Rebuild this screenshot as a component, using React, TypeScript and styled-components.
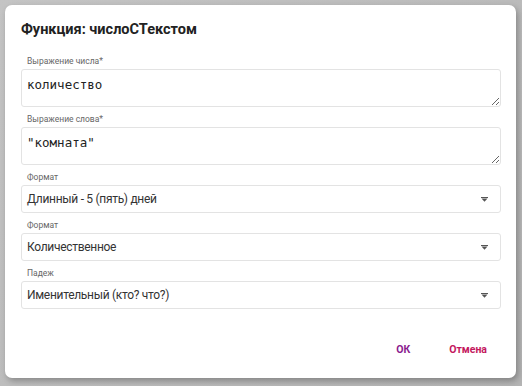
import React from "react";
import styled, { createGlobalStyle } from "styled-components";

const GlobalStyle = createGlobalStyle`
    html, body {
        margin: 0;
        padding: 0;
        width: 522px;
        height: 386px;
        overflow: hidden;
        background: #bcbcbc;
        font-family: Roboto, "Noto Sans", sans-serif;
    }
`;

const Backdrop = styled.div`
    width: 522px;
    height: 386px;
    padding: 5px 6px 8px 5px;
    box-sizing: border-box;
    background: linear-gradient(135deg, #c4c4c4 0%, #b4b4b4 100%);
`;

const Dialog = styled.div`
    width: 511px;
    height: 373px;
    box-sizing: border-box;
    background: #fff;
    border-radius: 7px;
    box-shadow: 2px 3px 6px rgba(0, 0, 0, 0.28);
    padding: 15px 15px 11px 16px;
    display: flex;
    flex-direction: column;
`;

const Title = styled.h2`
    margin: 0 0 15px;
    font-size: 14.5px;
    line-height: 20px;
    font-weight: 700;
    color: #222;
`;

const Fields = styled.div`
    display: flex;
    flex-direction: column;
    gap: 6px;
`;

const Field = styled.label`
    display: flex;
    flex-direction: column;
`;

const Label = styled.span`
    font-size: 8.5px;
    line-height: 12px;
    color: #666;
    padding-left: 6px;
    margin-bottom: 2px;
`;

const Area = styled.textarea<{ $height: number }>`
    display: block;
    box-sizing: border-box;
    width: 100%;
    height: ${(p) => p.$height}px;
    margin: 0;
    border: 1px solid #e3e3e3;
    border-radius: 3px;
    padding: 7px 5px;
    font-family: "DejaVu Sans Mono", "Liberation Mono", monospace;
    font-size: 12.5px;
    line-height: 16px;
    color: #222;
    resize: vertical;
    outline: none;
`;

const Select = styled.div`
    box-sizing: border-box;
    height: 28px;
    border: 1px solid #e3e3e3;
    border-radius: 3px;
    padding: 0 12px 0 5px;
    display: flex;
    align-items: center;
    justify-content: space-between;
    font-size: 12px;
    letter-spacing: -0.3px;
    color: #333;
`;

const Caret = styled.svg`
    width: 7px;
    height: 5px;
    fill: #555;
`;

const Actions = styled.div`
    margin-top: auto;
    display: flex;
    justify-content: flex-end;
    gap: 11px;
`;

const Button = styled.button<{ $color: string }>`
    height: 36px;
    padding: 0 14px;
    border: none;
    background: none;
    font-family: inherit;
    font-size: 10.5px;
    font-weight: 700;
    color: ${(p) => p.$color};
    cursor: pointer;
`;

const DropCaret = () => (
    <Caret viewBox="0 0 7 5">
        <rect x="0" y="0" width="7" height="1" />
        <path d="M0.5 1.4 H6.5 L3.5 4.8 Z" />
    </Caret>
);

const selects = [
    { label: "Формат", value: "Длинный - 5 (пять) дней" },
    { label: "Формат", value: "Количественное" },
    { label: "Падеж", value: "Именительный (кто? что?)" },
];

const App: React.FunctionComponent = () => {
    return (
        <Backdrop>
            <GlobalStyle />
            <Dialog>
                <Title>Функция: числоСТекстом</Title>
                <Fields>
                    <Field>
                        <Label>Выражение числа*</Label>
                        <Area $height={38} defaultValue="количество" />
                    </Field>
                    <Field>
                        <Label>Выражение слова*</Label>
                        <Area $height={38} defaultValue={'"комната"'} />
                    </Field>
                    {selects.map((item, i) => (
                        <Field key={i}>
                            <Label>{item.label}</Label>
                            <Select>
                                <span>{item.value}</span>
                                <DropCaret />
                            </Select>
                        </Field>
                    ))}
                </Fields>
                <Actions>
                    <Button $color="#8a1c8e">ОК</Button>
                    <Button $color="#c4185e">Отмена</Button>
                </Actions>
            </Dialog>
        </Backdrop>
    );
};

export default App;
